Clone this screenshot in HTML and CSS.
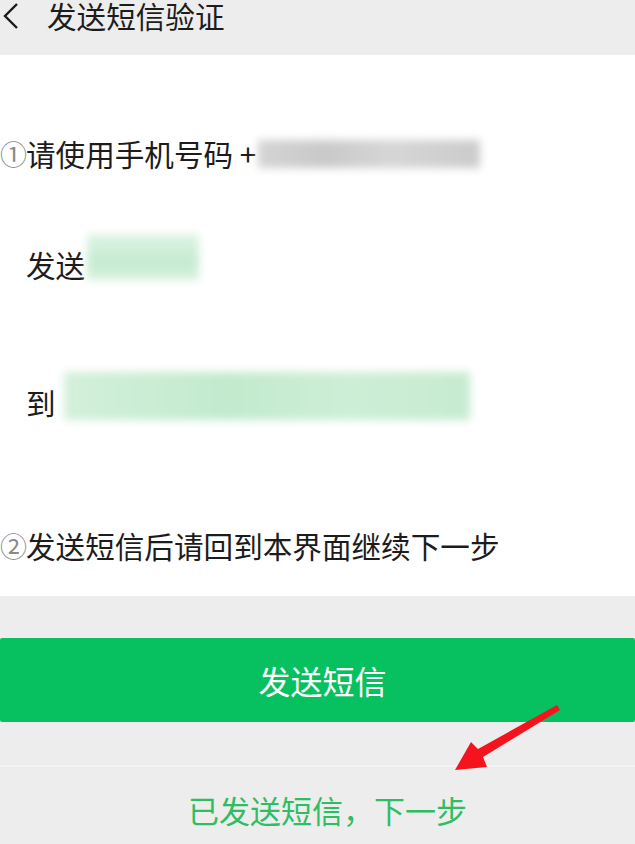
FILE: index.html
```html
<!DOCTYPE html>
<html lang="zh-CN">
<head>
<meta charset="utf-8">
<title>发送短信验证</title>
<link rel="stylesheet" href="styles.css">
</head>
<body>
<div class="page">
  <header class="topbar">
    <svg class="back" width="20" height="30" viewBox="0 0 20 30"><path d="M16 3 L4 15 L16 27" fill="none" stroke="#1a1a1a" stroke-width="2.4"/></svg>
    <span class="title">发送短信验证</span>
  </header>
  <section class="card">
    <div class="row row1"><span class="num">①</span>请使用手机号码 +<span class="blur gray"></span></div>
    <div class="row row2 indent">发送<span class="blur green short"></span></div>
    <div class="row row3 indent">到<span class="blur green long"></span></div>
    <div class="row row4"><span class="num">②</span>发送短信后请回到本界面继续下一步</div>
  </section>
  <div class="actions">
    <button class="primary">发送短信</button>
    <div class="divider"></div>
    <div class="next">已发送短信，下一步</div>
  </div>
  <svg class="arrow" width="635" height="844" viewBox="0 0 635 844">
    <polygon points="455,770 471,742 478,749 557,705 560,710 483,757 487,767" fill="#f5141e"/>
  </svg>
</div>
</body>
</html>
```

FILE: styles.css
```css
html, body {
  margin: 0;
  padding: 0;
  background: #ededed;
}
body {
  font-family: "Noto Sans CJK SC", "Noto Sans", sans-serif;
  color: #1c1c1c;
}
.page {
  position: relative;
  width: 635px;
  height: 844px;
  overflow: hidden;
  background: #ededed;
}
.topbar {
  height: 55px;
  display: flex;
  align-items: flex-start;
  background: #ededed;
}
.back {
  margin-left: 1px;
  margin-top: 1px;
}
.title {
  margin-left: 26px;
  font-size: 29.6px;
  line-height: 32px;
  margin-top: 0;
}
.card {
  background: #ffffff;
  height: 541px;
  box-sizing: border-box;
  padding-top: 74px;
  display: flex;
  flex-direction: column;
}
.row {
  height: 50px;
  line-height: 50px;
  font-size: 29.6px;
  display: flex;
  align-items: center;
  white-space: nowrap;
}
.row2 { margin-top: 61px; }
.row3 { margin-top: 88px; }
.row4 { margin-top: 93px; }
.indent { padding-left: 26px; }
.num {
  font-size: 27px;
  color: #8a8a8a;
  width: 26px;
  display: inline-block;
}
.blur {
  display: inline-block;
  filter: blur(4px);
}
.gray {
  width: 222px;
  height: 28px;
  margin-left: 2px;
  background: linear-gradient(90deg, #d4d4d4, #c9c9c9 30%, #d6d6d6 60%, #cbcbcb);
}
.green.short {
  width: 112px;
  height: 46px;
  margin-left: 2px;
  margin-top: -16px;
  background: linear-gradient(180deg, #dff4e5, #c4ebd0 60%, #d8f2df);
}
.green.long {
  width: 406px;
  height: 48px;
  margin-left: 8px;
  margin-top: -14px;
  background: linear-gradient(90deg, #d3f0db, #c2eacd 40%, #cdeed6 70%, #c6ebd0);
}
.actions {
  display: flex;
  flex-direction: column;
}
.primary {
  margin-top: 42px;
  height: 84px;
  width: 100%;
  border: none;
  border-radius: 2px;
  background: #07c160;
  color: #ffffff;
  font-family: "Noto Sans CJK SC", "Noto Sans", sans-serif;
  font-size: 32px;
  padding: 0 0 0 10px;
}
.divider {
  margin-top: 43px;
  height: 2px;
  background: #f3f3f3;
}
.next {
  height: 86px;
  line-height: 86px;
  text-align: center;
  font-size: 31px;
  color: #2fbd63;
  padding-left: 20px;
}
.arrow {
  position: absolute;
  left: 0;
  top: 0;
  pointer-events: none;
}
```
